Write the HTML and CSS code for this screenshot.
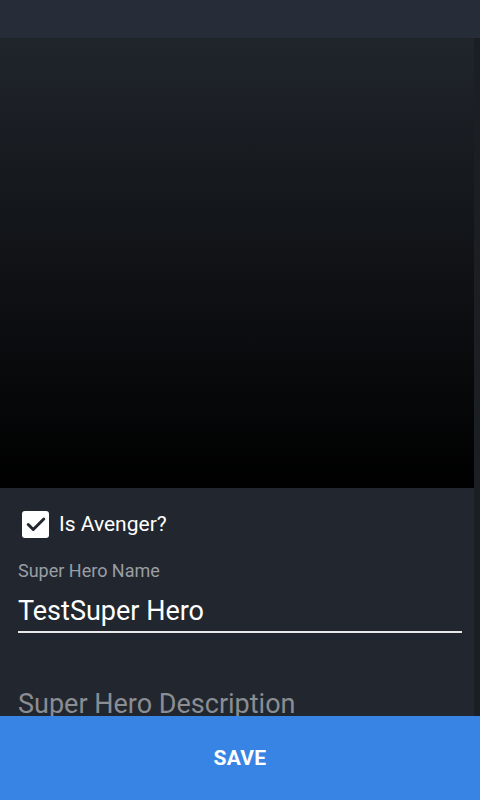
FILE: index.html
```html
<!DOCTYPE html>
<html>
<head>
<meta charset="utf-8">
<link rel="stylesheet" href="styles.css">
</head>
<body>
<div class="app">
  <header class="topbar"></header>
  <div class="scroll">
    <main class="content">
      <div class="hero"></div>
      <form class="form">
        <label class="check">
          <span class="box">
            <svg width="22" height="22" viewBox="0 0 24 24"><path d="M3.5 12.5l5.5 5.5L20.5 6.5" fill="none" stroke="#22272f" stroke-width="3.2" stroke-linecap="round" stroke-linejoin="round"/></svg>
          </span>
          <span class="check-label">Is Avenger?</span>
        </label>
        <div class="field">
          <div class="field-label">Super Hero Name</div>
          <div class="field-value">TestSuper Hero</div>
        </div>
        <div class="field field-empty">
          <div class="placeholder">Super Hero Description</div>
        </div>
      </form>
    </main>
    <div class="scrollbar"></div>
  </div>
  <button class="save">SAVE</button>
</div>
</body>
</html>
```
FILE: styles.css
```css
html, body {
  margin: 0;
  padding: 0;
  height: 100%;
  background: #22272f;
  font-family: Roboto, "Noto Sans", sans-serif;
}
.app {
  display: flex;
  flex-direction: column;
  height: 800px;
  overflow: hidden;
}
.topbar {
  height: 38px;
  flex: none;
  background: #262d38;
}
.scroll {
  flex: 1;
  display: flex;
  min-height: 0;
  overflow: hidden;
}
.content {
  flex: 1;
  min-width: 0;
  background: #22272f;
}
.scrollbar {
  width: 6px;
  flex: none;
  background: #1b1e23;
}
.hero {
  height: 450px;
  background: linear-gradient(to bottom, #20252c 0%, #000000 100%);
}
.form {
  padding: 22px 12px 0 18px;
}
.check {
  display: flex;
  align-items: center;
  margin-left: 4px;
  height: 28px;
}
.box {
  width: 27px;
  height: 27px;
  border-radius: 3px;
  background: #ffffff;
  display: flex;
  align-items: center;
  justify-content: center;
}
.check-label {
  margin-left: 10px;
  color: #ffffff;
  font-size: 21px;
}
.field {
  margin-top: 23px;
}
.field-label {
  color: #9a9ea5;
  font-size: 18px;
  line-height: 20px;
}
.field-value {
  color: #ffffff;
  font-size: 27px;
  line-height: 32px;
  margin-top: 14px;
  padding-bottom: 4px;
  border-bottom: 2px solid #e8e8e8;
}
.field-empty {
  margin-top: 54px;
}
.placeholder {
  color: #8a8d92;
  font-size: 27px;
  line-height: 34px;
}
.save {
  flex: none;
  height: 84px;
  border: 0;
  margin: 0;
  background: #3784e4;
  color: #ffffff;
  font-family: Roboto, sans-serif;
  font-weight: 700;
  font-size: 21px;
  letter-spacing: 0.3px;
  padding: 0;
}
```
